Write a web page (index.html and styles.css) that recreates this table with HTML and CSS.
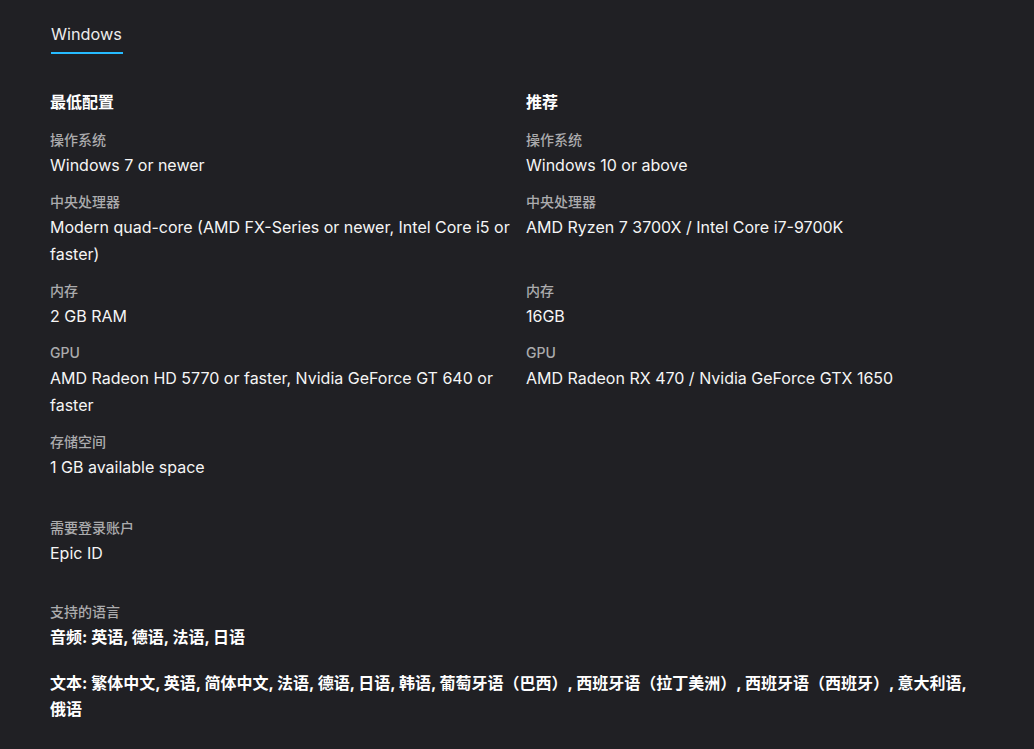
FILE: index.html
```html
<!DOCTYPE html>
<html lang="zh-CN">
<head>
<meta charset="utf-8">
<title>系统需求</title>
<link rel="stylesheet" href="styles.css">
</head>
<body>
<main class="page">
  <nav class="tabs">
    <span class="tab tab-active">Windows</span>
  </nav>

  <section class="specs">
    <h3 class="col-title">最低配置</h3>
    <h3 class="col-title">推荐</h3>

    <div class="spec">
      <div class="spec-label">操作系统</div>
      <div class="spec-value">Windows 7 or newer</div>
    </div>
    <div class="spec">
      <div class="spec-label">操作系统</div>
      <div class="spec-value">Windows 10 or above</div>
    </div>

    <div class="spec">
      <div class="spec-label">中央处理器</div>
      <div class="spec-value">Modern quad-core (AMD FX-Series or newer, Intel Core i5 or faster)</div>
    </div>
    <div class="spec">
      <div class="spec-label">中央处理器</div>
      <div class="spec-value">AMD Ryzen 7 3700X / Intel Core i7-9700K</div>
    </div>

    <div class="spec">
      <div class="spec-label">内存</div>
      <div class="spec-value">2 GB RAM</div>
    </div>
    <div class="spec">
      <div class="spec-label">内存</div>
      <div class="spec-value">16GB</div>
    </div>

    <div class="spec">
      <div class="spec-label">GPU</div>
      <div class="spec-value">AMD Radeon HD 5770 or faster, Nvidia GeForce GT 640 or faster</div>
    </div>
    <div class="spec">
      <div class="spec-label">GPU</div>
      <div class="spec-value">AMD Radeon RX 470 / Nvidia GeForce GTX 1650</div>
    </div>

    <div class="spec">
      <div class="spec-label">存储空间</div>
      <div class="spec-value">1 GB available space</div>
    </div>
  </section>

  <section class="extra extra-account">
    <div class="spec-label">需要登录账户</div>
    <div class="spec-value">Epic ID</div>
  </section>

  <section class="extra extra-lang">
    <div class="spec-label">支持的语言</div>
    <div class="spec-value lang">音频: 英语, 德语, 法语, 日语</div>
    <div class="spec-value lang lang-text">文本: 繁体中文, 英语, 简体中文, 法语, 德语, 日语, 韩语, 葡萄牙语（巴西）, 西班牙语（拉丁美洲）, 西班牙语（西班牙）, 意大利语, 俄语</div>
  </section>
</main>
</body>
</html>
```

FILE: styles.css
```css
html, body {
  margin: 0;
  padding: 0;
  background: #202024;
}

body {
  font-family: Inter, "Noto Sans CJK SC", "Noto Sans", sans-serif;
  color: #f5f5f5;
  -webkit-font-smoothing: antialiased;
}

.page {
  padding: 22px 44px 30px 50px;
}

.tabs {
  display: flex;
  padding-left: 1px;
}

.tab {
  font-size: 16.3px;
  line-height: 24px;
  color: #ececec;
  padding: 0 1px 6px 0;
  border-bottom: 2px solid #26bbff;
}

.specs {
  display: grid;
  grid-template-columns: 1fr 1fr;
  column-gap: 12px;
  row-gap: 12px;
  margin-top: 35px;
}

.col-title {
  margin: 0 0 2px 0;
  font-size: 16px;
  line-height: 26px;
  font-weight: 700;
  color: #ffffff;
}

.spec {
  display: flex;
  flex-direction: column;
}

.spec-label {
  font-size: 14px;
  line-height: 21px;
  color: #ababad;
  font-weight: 500;
}

.spec-value {
  margin-top: 2px;
  font-size: 16px;
  line-height: 27px;
  color: #f5f5f5;
}

.extra-account {
  margin-top: 36px;
}

.extra-lang {
  margin-top: 34px;
}

.lang {
  font-weight: 700;
  color: #ffffff;
}

.lang-text {
  margin-top: 19px;
  line-height: 26px;
  word-break: keep-all;
}
```
